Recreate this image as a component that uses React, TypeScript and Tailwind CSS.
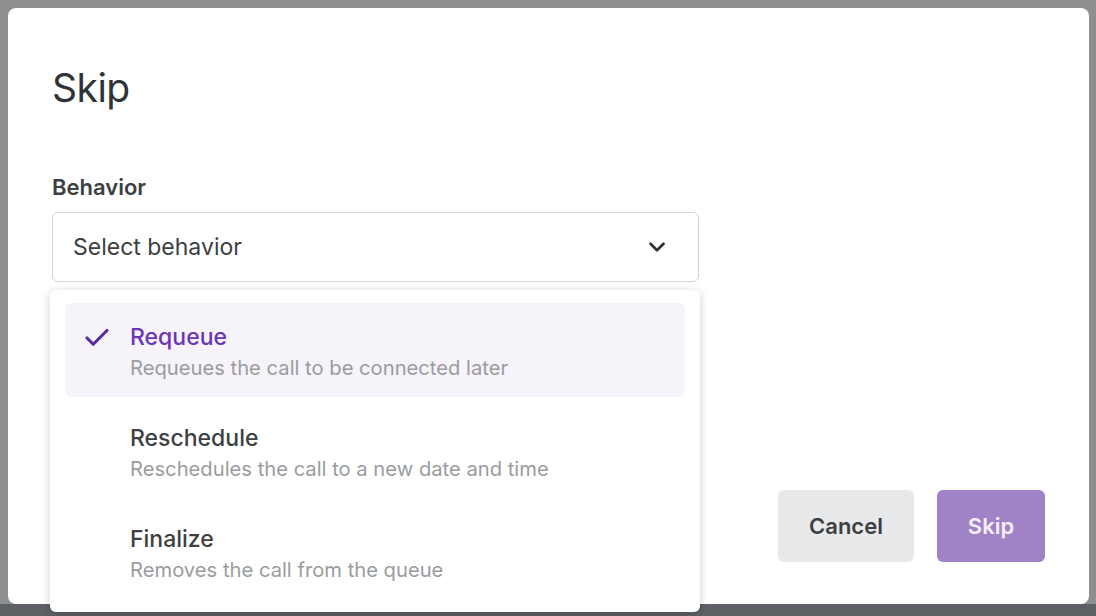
import React from 'react';
import { Check, ChevronDown } from 'lucide-react';

const options = [
  { title: 'Requeue', desc: 'Requeues the call to be connected later', selected: true },
  { title: 'Reschedule', desc: 'Reschedules the call to a new date and time', selected: false },
  { title: 'Finalize', desc: 'Removes the call from the queue', selected: false },
];

export default function App() {
  return (
    <div
      className="relative w-[1096px] h-[616px] overflow-hidden bg-[#8d8e90] text-[#3c4043]"
      style={{ fontFamily: 'Inter, Roboto, "Noto Sans", sans-serif' }}
    >
      {/* backdrop strip at the bottom */}
      <div className="absolute left-0 right-0 bottom-0 h-[12px] bg-[#5d6165]" />

      {/* Dialog */}
      <div className="absolute left-[8px] top-[8px] w-[1081px] h-[596px] rounded-lg bg-white flex flex-col pl-[44px] pr-[44px] pt-[56px] pb-[42px]">
        <h2 className="text-[39px] leading-[48px] font-normal tracking-[-0.5px] text-[#2f3337]">Skip</h2>

        <label className="mt-[61px] text-[22px] leading-[28px] font-semibold text-[#3c4043]">Behavior</label>

        <div className="relative mt-[11px] w-[647px]">
          <div className="h-[70px] rounded-md border border-[#d2d4d7] flex items-center justify-between pl-[20px] pr-[28px]">
            <span className="text-[23px] text-[#3c4043]">Select behavior</span>
            <ChevronDown size={26} strokeWidth={2.5} className="text-[#2f3337]" />
          </div>

          {/* Dropdown menu */}
          <div className="absolute left-[-2px] top-[78px] w-[650px] rounded-md bg-white shadow-[0_2px_10px_rgba(0,0,0,0.2)] px-[15px] py-[13px] flex flex-col gap-[7px] z-10">
            {options.map(o => (
              <div
                key={o.title}
                className={
                  o.selected
                    ? 'relative h-[94px] rounded-md bg-[#f6f3fa] pl-[65px] pt-[20px]'
                    : 'relative h-[94px] rounded-md pl-[65px] pt-[20px]'
                }
              >
                {o.selected && (
                  <Check size={30} strokeWidth={2.5} className="absolute left-[17px] top-[20px] text-[#5a2ca0]" />
                )}
                <div
                  className={
                    o.selected
                      ? 'text-[23px] leading-[28px] font-medium text-[#6c35b5]'
                      : 'text-[23px] leading-[28px] font-medium text-[#3c4043]'
                  }
                >
                  {o.title}
                </div>
                <div className="mt-[3px] text-[20.2px] leading-[28px] text-[#9a9ca0]">{o.desc}</div>
              </div>
            ))}
          </div>
        </div>

        <div className="flex-1" />

        <div className="flex justify-end gap-[23px]">
          <button className="w-[136px] h-[72px] rounded-md bg-[#e8e9eb] text-[22px] font-semibold text-[#3c4043]">
            Cancel
          </button>
          <button className="w-[108px] h-[72px] rounded-md bg-[#a082c6] text-[22px] font-semibold text-[#f4eff9]">
            Skip
          </button>
        </div>
      </div>
    </div>
  );
}
